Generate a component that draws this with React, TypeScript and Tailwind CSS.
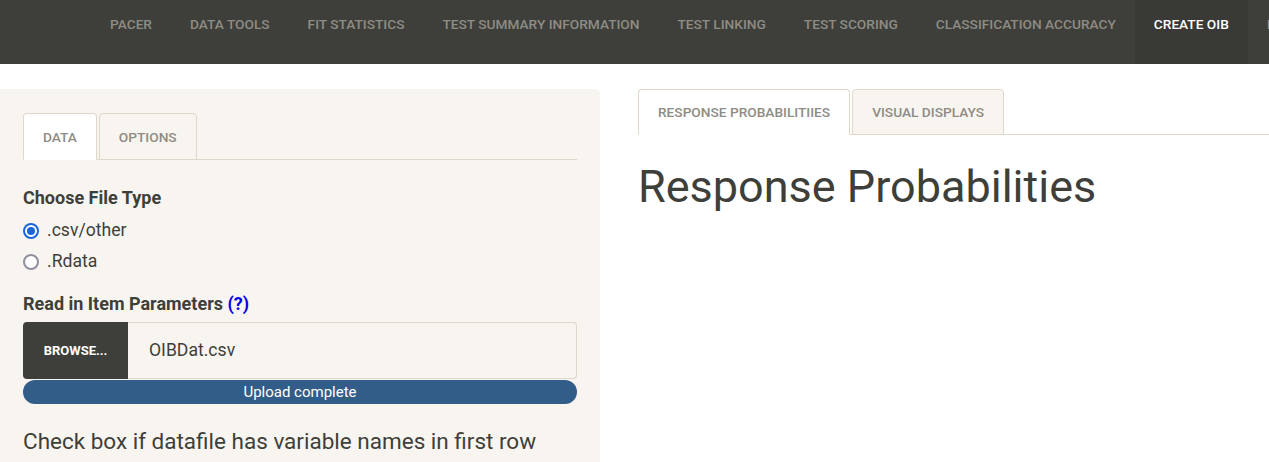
import React, { useState } from 'react'

const navItems = [
  'PACER',
  'DATA TOOLS',
  'FIT STATISTICS',
  'TEST SUMMARY INFORMATION',
  'TEST LINKING',
  'TEST SCORING',
  'CLASSIFICATION ACCURACY',
  'CREATE OIB',
  'INFO',
]

const Radio: React.FC<{ checked: boolean; label: string; onClick: () => void }> = ({ checked, label, onClick }) => (
  <label className="flex items-center h-[31px] cursor-pointer" onClick={onClick}>
    <span
      className={`w-[16px] h-[16px] rounded-full flex items-center justify-center ${
        checked ? 'border-[2px] border-[#1a66d6]' : 'border-[2px] border-[#8f8f9d]'
      } bg-white`}
    >
      {checked && <span className="w-[8px] h-[8px] rounded-full bg-[#1a66d6]" />}
    </span>
    <span className="ml-[8px] text-[17.6px] text-[#3e3f3a]">{label}</span>
  </label>
)

const App: React.FC = () => {
  const [fileType, setFileType] = useState('csv')
  const [sideTab, setSideTab] = useState('DATA')
  const [mainTab, setMainTab] = useState('RESPONSE PROBABILITIIES')

  return (
    <div className="w-[1269px] h-[462px] overflow-hidden bg-white font-['Roboto',sans-serif]">
      {/* Navbar */}
      <nav className="h-[64px] bg-[#3e3f3a] flex pl-[91px] overflow-hidden whitespace-nowrap">
        {navItems.map((item) => (
          <div
            key={item}
            className={`h-[64px] px-[19px] pt-[14px] text-[13.7px] font-medium shrink-0 ${
              item === 'CREATE OIB' ? 'bg-[#393a35] text-white' : 'text-[#8e8c84]'
            }`}
          >
            {item}
          </div>
        ))}
      </nav>

      <div className="flex mt-[25px]">
        {/* Sidebar */}
        <div className="w-[600px] shrink-0 h-[400px] bg-[#f8f5f0] rounded-tr-[5px] px-[23px] pt-[24px]">
          <div className="flex border-b border-[#dfd7ca] h-[47px]">
            {['DATA', 'OPTIONS'].map((t) => (
              <button
                key={t}
                onClick={() => setSideTab(t)}
                className={`h-[47px] px-[19px] pt-[2px] mr-[2px] text-[13.7px] font-medium text-[#8e8c84] rounded-t-[4px] border border-[#dfd7ca] ${
                  sideTab === t ? 'bg-white border-b-white' : 'bg-[#f8f5f0]'
                }`}
              >
                {t}
              </button>
            ))}
          </div>

          <div className="mt-[26px] text-[18px] font-bold text-[#3e3f3a] leading-[24px]">Choose File Type</div>
          <div className="mt-[5px]">
            <Radio checked={fileType === 'csv'} label=".csv/other" onClick={() => setFileType('csv')} />
            <Radio checked={fileType === 'rdata'} label=".Rdata" onClick={() => setFileType('rdata')} />
          </div>

          <div className="mt-[15px] text-[18px] font-bold text-[#3e3f3a] leading-[24px]">
            Read in Item Parameters <span className="text-[#0000ee]">(?)</span>
          </div>
          <div className="mt-[6px] flex h-[57px]">
            <div className="w-[105px] bg-[#3e3f3a] rounded-l-[4px] flex items-center justify-center text-white text-[13px] font-bold">
              BROWSE...
            </div>
            <div className="flex-1 border border-l-0 border-[#dfd7ca] rounded-r-[4px] flex items-center pl-[21px] text-[17.6px] text-[#3e3f3a]">
              OIBDat.csv
            </div>
          </div>
          <div className="mt-[1px] h-[24px] rounded-full bg-[#325d88] flex items-center justify-center text-white text-[15px]">
            Upload complete
          </div>

          <div className="mt-[22px] text-[22.5px] text-[#3e3f3a] leading-[30px]">
            Check box if datafile has variable names in first row
          </div>
        </div>

        {/* Main */}
        <div className="flex-1 ml-[38px]">
          <div className="flex border-b border-[#dfd7ca] h-[46px]">
            {['RESPONSE PROBABILITIIES', 'VISUAL DISPLAYS'].map((t) => (
              <button
                key={t}
                onClick={() => setMainTab(t)}
                className={`h-[46px] px-[19px] mr-[2px] text-[13.7px] font-medium text-[#8e8c84] rounded-t-[4px] border border-[#dfd7ca] ${
                  mainTab === t ? 'bg-white border-b-white' : 'bg-[#f8f5f0]'
                }`}
              >
                {t}
              </button>
            ))}
          </div>
          <h1 className="mt-[26px] text-[45px] leading-[52px] text-[#3e3f3a]">Response Probabilities</h1>
        </div>
      </div>
    </div>
  )
}

export default App
